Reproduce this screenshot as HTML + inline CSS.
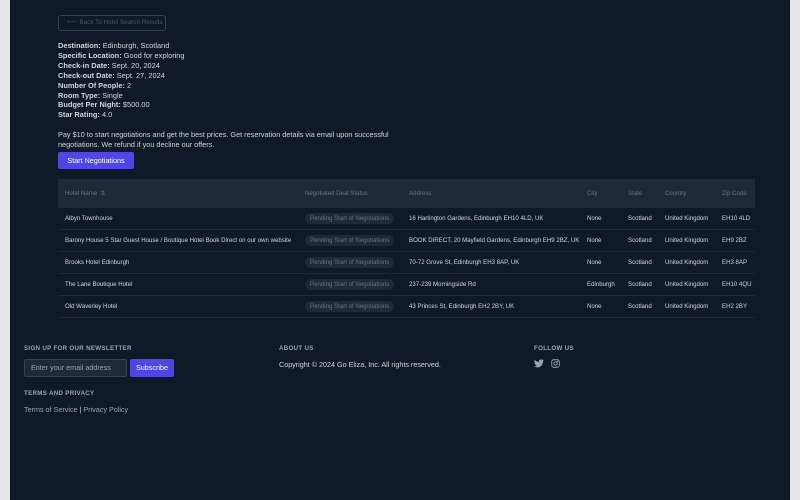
<!DOCTYPE html>
<html><head><style>
*{margin:0;padding:0;box-sizing:border-box}
body{width:800px;height:500px;background:#e5e7eb;font-family:"Liberation Sans",sans-serif;overflow:hidden;position:relative}
.main{position:absolute;left:10px;top:0;width:780px;height:500px;background:#111827;color:#d1d5db}
.a{position:absolute}
.back{left:48px;top:15px;width:108px;height:16px;border:1px solid #374151;border-radius:3px;color:#4b5563;font-size:6.3px;line-height:14px;padding-left:8px;white-space:nowrap}
.det{left:48px;top:41px;font-size:7.4px;line-height:9.9px;color:#d1d5db}
.pay{left:48px;top:130px;font-size:7.3px;line-height:10px;width:345px}
.btn{left:48px;top:152px;width:76px;height:17px;background:#4f46e5;color:#fff;font-size:7.2px;line-height:17px;text-align:center;border-radius:2px}
table{position:absolute;left:48px;top:179px;width:697px;border-collapse:collapse;font-size:6.1px;table-layout:fixed}
th{background:#1f2937;color:#6b7280;font-weight:normal;text-align:left;height:28px;padding-left:7px;padding-top:2px}
td{height:22px;border-top:1px solid #1f2937;border-bottom:1px solid #1f2937;padding-left:7px;color:#d1d5db;white-space:nowrap;overflow:hidden}
.pill{background:#1f2937;color:#6b7280;border-radius:6px;padding:2px 5px}
.h{font-size:6.2px;font-weight:bold;color:#9ca3af;letter-spacing:.3px}
.f{font-size:7.2px}
</style></head><body>
<div class="main">
<div class="a back">⟵ &nbsp;Back To Hotel Search Results</div>
<div class="a det"><b>Destination:</b> Edinburgh, Scotland<br><b>Specific Location:</b> Good for exploring<br><b>Check-in Date:</b> Sept. 20, 2024<br><b>Check-out Date:</b> Sept. 27, 2024<br><b>Number Of People:</b> 2<br><b>Room Type:</b> Single<br><b>Budget Per Night:</b> $500.00<br><b>Star Rating:</b> 4.0</div>
<div class="a pay">Pay $10 to start negotiations and get the best prices. Get reservation details via email upon successful negotiations. We refund if you decline our offers.</div>
<div class="a btn">Start Negotiations</div>
<table>
<colgroup><col style="width:240px"><col style="width:104px"><col style="width:178px"><col style="width:41px"><col style="width:37px"><col style="width:57px"><col style="width:40px"></colgroup>
<tr><th>Hotel Name &nbsp;⇅</th><th>Negotiated Deal Status</th><th>Address</th><th>City</th><th>State</th><th>Country</th><th>Zip Code</th></tr>
<tr><td>Albyn Townhouse</td><td><span class="pill">Pending Start of Negotiations</span></td><td>16 Hartington Gardens, Edinburgh EH10 4LD, UK</td><td>None</td><td>Scotland</td><td>United Kingdom</td><td>EH10 4LD</td></tr>
<tr><td>Barony House 5 Star Guest House / Boutique Hotel Book Direct on our own website</td><td><span class="pill">Pending Start of Negotiations</span></td><td>BOOK DIRECT, 20 Mayfield Gardens, Edinburgh EH9 2BZ, UK</td><td>None</td><td>Scotland</td><td>United Kingdom</td><td>EH9 2BZ</td></tr>
<tr><td>Brooks Hotel Edinburgh</td><td><span class="pill">Pending Start of Negotiations</span></td><td>70-72 Grove St, Edinburgh EH3 8AP, UK</td><td>None</td><td>Scotland</td><td>United Kingdom</td><td>EH3 8AP</td></tr>
<tr><td>The Lane Boutique Hotel</td><td><span class="pill">Pending Start of Negotiations</span></td><td>237-239 Morningside Rd</td><td>Edinburgh</td><td>Scotland</td><td>United Kingdom</td><td>EH10 4QU</td></tr>
<tr><td>Old Waverley Hotel</td><td><span class="pill">Pending Start of Negotiations</span></td><td>43 Princes St, Edinburgh EH2 2BY, UK</td><td>None</td><td>Scotland</td><td>United Kingdom</td><td>EH2 2BY</td></tr>
</table>
<div class="a h" style="left:14px;top:345px">SIGN UP FOR OUR NEWSLETTER</div>
<div class="a" style="left:14px;top:359px;width:103px;height:18px;background:#1f2937;border:1px solid #374151;border-radius:2px;color:#9ca3af;font-size:7.2px;line-height:16px;padding-left:6px">Enter your email address</div>
<div class="a" style="left:120px;top:359px;width:44px;height:18px;background:#4f46e5;color:#fff;font-size:7.2px;line-height:18px;text-align:center;border-radius:2px">Subscribe</div>
<div class="a h" style="left:14px;top:390px">TERMS AND PRIVACY</div>
<div class="a f" style="left:14px;top:405px;color:#9ca3af">Terms of Service <span style="color:#d1d5db">|</span> Privacy Policy</div>
<div class="a h" style="left:269px;top:345px">ABOUT US</div>
<div class="a f" style="left:269px;top:360px">Copyright © 2024 Go Eliza, Inc. All rights reserved.</div>
<div class="a h" style="left:524px;top:345px">FOLLOW US</div>
<svg class="a" style="left:524px;top:359px" width="10" height="9" viewBox="0 0 24 20"><path fill="#9ca3af" d="M24 2.4a10 10 0 0 1-2.8.8A5 5 0 0 0 23.3.5a10 10 0 0 1-3.1 1.2A4.9 4.9 0 0 0 11.8 6 14 14 0 0 1 1.7.9a4.9 4.9 0 0 0 1.5 6.6 4.9 4.9 0 0 1-2.2-.6 4.9 4.9 0 0 0 3.9 4.8 5 5 0 0 1-2.2.1 4.9 4.9 0 0 0 4.6 3.4A9.9 9.9 0 0 1 0 17.2 14 14 0 0 0 7.5 19.4c9 0 14-7.5 14-14v-.6A10 10 0 0 0 24 2.4z"/></svg>
<svg class="a" style="left:541px;top:359px" width="9" height="9" viewBox="0 0 24 24" fill="none" stroke="#9ca3af" stroke-width="2.4"><rect x="2" y="2" width="20" height="20" rx="5"/><circle cx="12" cy="12" r="4.5"/><circle cx="17.5" cy="6.5" r=".8" fill="#9ca3af"/></svg>
</div>
</body></html>
